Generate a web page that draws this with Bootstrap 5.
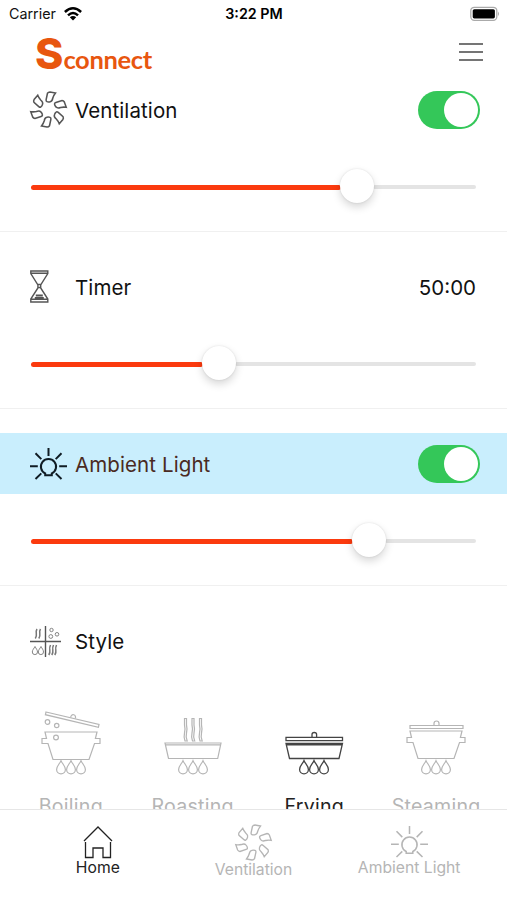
<!DOCTYPE html>
<html lang="en">
<head>
<meta charset="utf-8">
<meta name="viewport" content="width=device-width, initial-scale=1">
<title>Sconnect</title>
<link href="https://cdn.jsdelivr.net/npm/bootstrap@5.3.0/dist/css/bootstrap.min.css" rel="stylesheet">
<style>
body{font-family:Inter,"Liberation Sans",sans-serif;color:#111;background:#fff}
svg{display:block;fill:none;stroke:currentColor;flex:none;overflow:visible}
.screen{width:507px;height:900px}
.status{height:28px;padding:0 8px 0 9px;font-size:14.3px}
.status>div{flex:1 1 0}
.brandbar{height:51px;padding:0 24px 4px 35px}
.logo{color:#e8560f;line-height:46px;height:46px;white-space:nowrap;padding-top:1px}
.logo-s{font-size:43px;font-weight:800}
.logo-rest{font-family:Lato,sans-serif;font-size:25.5px;font-weight:700;letter-spacing:-.35px}
.setting{height:177.2px;padding-top:24.5px;border-bottom:1px solid #f0f0f0}
.setting.first{height:152.5px;padding-top:0}
.setting-row{height:61px;padding:0 27px 0 30px;font-size:20.5px}
.setting-name,.setting-value{padding-top:4px}
.setting-name{margin-left:8px;letter-spacing:.1px}
.lit{background:#c9eefd;color:#4a2a22}
.toggle{width:62px;height:38px;border-radius:19px;background:#34c759;padding:2px}
.knob{width:34px;height:34px;border-radius:50%;background:#fff}
.slide{height:34px;margin:30px 31px 0}
.bar-on{height:5px;border-radius:3px;background:#fb3a0e}
.bar-off{height:4.5px;border-radius:3px;background:#e4e4e4}
.thumb{width:34px;height:34px;border-radius:50%;background:#fff;box-shadow:0 4px 9px rgba(0,0,0,.16),0 0 2px rgba(0,0,0,.12);margin:-2px -1px 0;flex:none;z-index:1}
.styles{padding:38px 10px 0;color:#b5b5b5}
.style-item{width:121.8px}
.style-name{font-size:19.6px;line-height:24px;margin-top:20px;letter-spacing:.25px}
.picked{color:#222}
.tabs{height:91px;border-top:1px solid #e6e6e6;color:#b5b5b5;background:#fff;font-size:15.7px;padding:0 20px}
.tab{width:155.7px;line-height:18px;white-space:nowrap}
.tab-low{padding-top:1px}
</style>
<script src="https://cdn.jsdelivr.net/npm/bootstrap@5.3.0/dist/js/bootstrap.bundle.min.js"></script>
</head>
<body>
<svg width="0" height="0" class="position-absolute" aria-hidden="true">
<defs>
<path id="blade" d="M-1-15.800Q-.2-17 1.400-17L6.800-16Q5-13.800 4.200-11.200Q3.600-8 1.700-7.600Q-.2-7.100-1.600-7.700Q-2.600-8-2.300-9.600Z"/>
<symbol id="fan" viewBox="-18 -18 36 36" overflow="visible">
<use href="#blade"/><use href="#blade" transform="rotate(60)"/><use href="#blade" transform="rotate(120)"/><use href="#blade" transform="rotate(180)"/><use href="#blade" transform="rotate(240)"/><use href="#blade" transform="rotate(300)"/>
</symbol>
<symbol id="bulb" viewBox="0 0 37 32" overflow="visible">
<path d="M15.200 27.300V25.500A7.600 7.600 0 1 1 21.800 25.500V27.300z"/>
<path d="M18.500 0v8M0 18.300h7.800M29.200 18.300H37M5.500 5.300l5.800 5.800M31.500 5.300l-5.800 5.800M5.500 31l5.800-5.600M31.500 31l-5.800-5.600"/>
</symbol>
<path id="drop" d="M5 .6C3.800 3.700.6 6 .6 9.400a4.400 4.400 0 0 0 8.800 0C9.400 6 6.200 3.700 5 .6z"/>
<g id="flames"><use href="#drop" x="15"/><use href="#drop" x="25"/><use href="#drop" x="35"/></g>
<path id="pot" d="M4 .5H56l-1.600 6.500H59v5h-5.500L48 28H12L7 12H1V7h4.500z"/>
</defs>
</svg>
<main class="screen d-flex flex-column overflow-hidden">
<header class="flex-shrink-0">
<div class="status d-flex align-items-center">
<div class="d-flex align-items-center">Carrier
<svg class="ms-2" width="18" height="14" viewBox="0 0 18 14" style="color:#000"><path stroke-width="2.500" d="M.9 5Q9-2.500 17.100 5M4 8.300Q9 3.600 14 8.300"/><path fill="currentColor" stroke="none" d="M9 13.500L5.800 10.300Q9 7.700 12.200 10.300z"/></svg></div>
<div class="text-center fw-semibold text-black text-nowrap">3:22 PM</div>
<div class="d-flex justify-content-end"><svg width="29" height="15" viewBox="0 0 29 15"><rect x=".8" y=".3" width="26" height="13" rx="3.500" stroke="#aaa" stroke-width="1.300"/><rect x="2.700" y="2.200" width="22.200" height="9.200" rx="1.600" fill="#000" stroke="none"/><path d="M28 4.500q2 2.300 0 4.600z" fill="#aaa" stroke="none"/></svg></div>
</div>
<div class="brandbar d-flex align-items-center justify-content-between">
<div class="logo"><span class="logo-s">S</span><span class="logo-rest">connect</span></div>
<svg width="24" height="20" viewBox="0 0 24 20" stroke-width="2" style="color:#757575"><path d="M0 2h24M0 10h24M0 18h24"/></svg>
</div>
</header>
<div class="flex-grow-1 overflow-hidden">
<section class="setting first">
<div class="setting-row d-flex align-items-center"><svg width="37" height="37" stroke-width="1.500" style="color:#555"><use href="#fan"/></svg><span class="setting-name">Ventilation</span><div class="toggle ms-auto d-flex justify-content-end"><div class="knob"></div></div></div>
<div class="slide d-flex align-items-center"><div class="bar-on" style="width:310px"></div><div class="thumb"></div><div class="bar-off flex-grow-1"></div></div>
</section>
<section class="setting">
<div class="setting-row d-flex align-items-center"><svg width="37" height="33" viewBox="0 0 37 33" stroke-width="1.400" style="color:#555"><path d="M.8 1h17v2.500L10.700 15v3L17.800 29v3H.8v-3L7.900 18v-3L.8 3.500zM1 3.300h16.600M1 29.300h16.600M7.500 14.500h3.600M7.900 17.500h2.800"/><path stroke-width="2.200" d="M5.800 25.500h7M4.800 28h9"/></svg><span class="setting-name">Timer</span><span class="setting-value ms-auto me-1">50:00</span></div>
<div class="slide d-flex align-items-center"><div class="bar-on" style="width:172px"></div><div class="thumb"></div><div class="bar-off flex-grow-1"></div></div>
</section>
<section class="setting">
<div class="setting-row lit d-flex align-items-center"><svg width="37" height="32" stroke-width="2" style="color:#101c24"><use href="#bulb"/></svg><span class="setting-name">Ambient Light</span><div class="toggle ms-auto d-flex justify-content-end"><div class="knob"></div></div></div>
<div class="slide d-flex align-items-center"><div class="bar-on" style="width:322px"></div><div class="thumb"></div><div class="bar-off flex-grow-1"></div></div>
</section>
<section class="pt-4">
<div class="setting-row d-flex align-items-center"><svg class="mt-1" width="37" height="32" viewBox="0 0 37 32" style="color:#777"><path stroke="#555" stroke-width="1.400" d="M15.500 0v31M0 15.500h31"/><path stroke-width="1.500" d="M7 3q-1.200 2-.7 4.500t-1 5M10.500 3q-1.200 2-.7 4.500t-1 5M20.500 19q-1.200 2.500-.7 5t-1 5M23.500 19q-1.200 2.500-.7 5t-1 5M26.500 19q-1.200 2.500-.7 5t-1 5"/><g stroke-width=".9"><circle cx="21.500" cy="4" r="1.700"/><circle cx="27" cy="8.300" r="1.800"/><circle cx="20.800" cy="10.500" r="1.900"/><path d="M5 20.500C4 22.500 2.300 24 2.300 26a2.600 2.600 0 0 0 5.200 0C7.500 24 6 22.500 5 20.500zM11 20.500c-1 2-2.700 3.500-2.700 5.500a2.600 2.600 0 0 0 5.200 0c0-2-1.500-3.500-2.500-5.500z"/></g></svg><span class="setting-name">Style</span></div>
<div class="styles d-flex">
<div class="style-item d-flex flex-column align-items-center"><svg width="60" height="65" viewBox="0 0 60 65" stroke-width="1.200"><path d="M5 3l53 12.500-.6 2.800L4.400 5.700z"/><path d="M29.800 8.500a2.400 2.400 0 1 1 4.400.9"/><circle cx="6.500" cy="13" r="2.300"/><circle cx="15.700" cy="16.500" r="2.200"/><circle cx="15" cy="28.500" r="2.400"/><use href="#pot" y="22.500"/><use href="#flames" y="51"/></svg><div class="style-name">Boiling</div></div>
<div class="style-item d-flex flex-column align-items-center"><svg width="60" height="65" viewBox="0 0 60 65" stroke-width="1.200"><path d="M2 34h56l-3.300 15.500H5.500zM3 35.800h54M22 32q-1.500-4-.5-8t0-8V9.500h2v6.500q1 4 0 8t.7 8zM29.500 32q-1.500-4-.5-8t0-8V9.500h2v6.500q1 4 0 8t.7 8zM37 32q-1.500-4-.5-8t0-8V9.500h2v6.500q1 4 0 8t.7 8z"/><use href="#flames" y="51"/></svg><div class="style-name">Roasting</div></div>
<div class="style-item picked d-flex flex-column align-items-center"><svg width="60" height="65" viewBox="0 0 60 65" style="color:#444" stroke-width="1.300"><path d="M2 28.300h56.500v3.400H2zM2 34.500h56.500L55 49.500H5.500zM2.800 35.900h55M28 28v-2.500q0-2 2.300-2t2.300 2V28"/><use href="#flames" y="51"/></svg><div class="style-name">Frying</div></div>
<div class="style-item d-flex flex-column align-items-center"><svg width="60" height="65" viewBox="0 0 60 65" stroke-width="1.200"><path d="M4 16.500h53v3H4zM28 16v-1.500q0-2.500 2.500-2.500t2.500 2.500V16"/><use href="#pot" y="21.500"/><use href="#flames" y="51"/></svg><div class="style-name">Steaming</div></div>
</div>
</section>
</div>
<nav class="tabs d-flex flex-shrink-0">
<div class="tab picked d-flex flex-column align-items-center"><svg style="margin-top:16px" width="30" height="33" viewBox="0 0 30 33" stroke-width="1.300"><path d="M1 15L15 1l14 14M2.500 16v15.500H10V22h10v9.500h7.500V16"/></svg><span>Home</span></div>
<div class="tab d-flex flex-column align-items-center"><svg style="margin-top:14px" width="37" height="37" stroke-width="1.300"><use href="#fan"/></svg><span>Ventilation</span></div>
<div class="tab d-flex flex-column align-items-center"><svg style="margin-top:16px" width="37" height="32" stroke-width="1.500"><use href="#bulb"/></svg><span class="tab-low">Ambient Light</span></div>
</nav>
</main>
</body>
</html>
